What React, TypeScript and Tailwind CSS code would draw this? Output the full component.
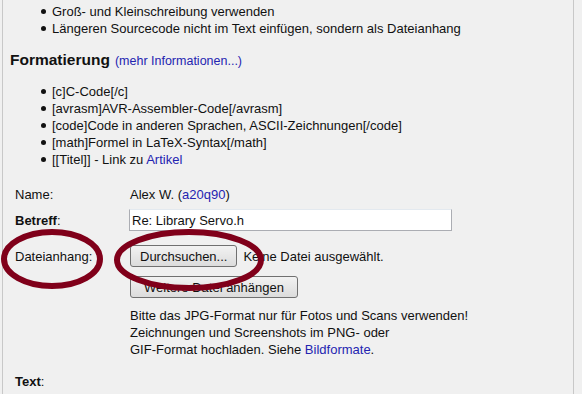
const rules = [
  "Groß- und Kleinschreibung verwenden",
  "Längeren Sourcecode nicht im Text einfügen, sondern als Dateianhang",
];

const formatting = [
  "[c]C-Code[/c]",
  "[avrasm]AVR-Assembler-Code[/avrasm]",
  "[code]Code in anderen Sprachen, ASCII-Zeichnungen[/code]",
  "[math]Formel in LaTeX-Syntax[/math]",
];

function Bullet({ children }: { children: React.ReactNode }) {
  return (
    <li className="flex items-center h-[17px]">
      <span className="ml-[38px] mr-[6px] w-[5px] h-[5px] rounded-full bg-[#111]" />
      <span>{children}</span>
    </li>
  );
}

const btn =
  "h-[22px] rounded-[3px] border border-[#707070] bg-gradient-to-b from-[#f2f2f2] to-[#dcdcdc] text-[13px] text-[#111] leading-none";

export default function App() {
  return (
    <div className="relative w-[582px] h-[394px] overflow-hidden bg-[#f0f0f0] font-['Liberation_Sans',Arial,sans-serif] text-[13px] text-[#111]">
      <div className="ml-[2px] w-[572px] h-full border-l border-r border-[#c8c8c8] pt-[3px]">
        <ul>
          {rules.map((r) => (
            <Bullet key={r}>{r}</Bullet>
          ))}
        </ul>

        <h2 className="mt-[11px] ml-[7px] flex items-baseline gap-[5px]">
          <span className="text-[15.5px] font-bold">Formatierung</span>
          <a className="text-[12.5px] text-[#2424b0]">(mehr Informationen...)</a>
        </h2>

        <ul className="mt-[12px]">
          {formatting.map((r) => (
            <Bullet key={r}>{r}</Bullet>
          ))}
          <Bullet>
            [[Titel]] - Link zu <a className="text-[#2424b0]">Artikel</a>
          </Bullet>
        </ul>

        <div className="mt-[17px] ml-[12px] grid grid-cols-[115px_1fr] items-center">
          <div className="h-[17px]">Name:</div>
          <div className="h-[17px]">
            Alex W. (<a className="text-[#2424b0]">a20q90</a>)
          </div>

          <div className="mt-[7px]">
            <b>Betreff</b>:
          </div>
          <div className="mt-[7px]">
            <div className="-ml-[1px] w-[323px] h-[22px] bg-white border border-[#abadb3] border-t-[#e3e9ef] flex items-center px-[2px]">
              Re: Library Servo.h
            </div>
          </div>

          <div className="mt-[14px]">Dateianhang:</div>
          <div className="mt-[14px] flex items-center gap-[6px]">
            <button className={`${btn} px-[9px]`}>Durchsuchen...</button>
            <span>Keine Datei ausgewählt.</span>
          </div>

          <div />
          <div className="mt-[9px]">
            <button className={`${btn} px-[13px]`}>Weitere Datei anhängen</button>
          </div>

          <div />
          <div className="mt-[9px] leading-[17px]">
            Bitte das JPG-Format nur für Fotos und Scans verwenden!
            <br />
            Zeichnungen und Screenshots im PNG- oder
            <br />
            GIF-Format hochladen. Siehe <a className="text-[#2424b0]">Bildformate</a>.
          </div>

          <div className="mt-[14px]">
            <b>Text</b>:
          </div>
          <div />
        </div>
      </div>

      <svg
        className="absolute left-0 top-0 pointer-events-none"
        width="582"
        height="394"
        viewBox="0 0 582 394"
      >
        <ellipse cx="52" cy="259" rx="48" ry="27" fill="none" stroke="#80001a" strokeWidth="6" />
        <ellipse cx="189" cy="260" rx="72" ry="28" fill="none" stroke="#80001a" strokeWidth="6" />
      </svg>
    </div>
  );
}
